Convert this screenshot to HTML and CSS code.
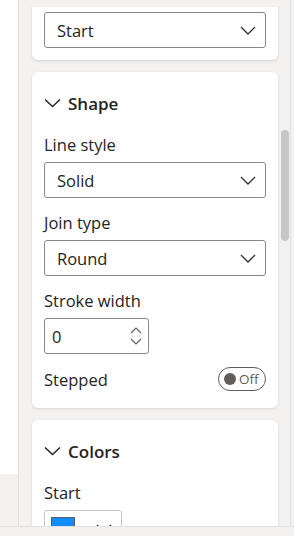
FILE: index.html
```html
<!DOCTYPE html>
<html lang="en">
<head>
    <meta charset="UTF-8">
    <meta name="viewport" content="width=device-width, initial-scale=1.0">
    <title>Format pane</title>
    <link rel="stylesheet" href="styles.css">
</head>
<body>
    <div class="app">
        <!-- Left strip -->
        <div class="side">
            <div class="side-top"></div>
            <div class="side-bottom"></div>
        </div>

        <!-- Format pane -->
        <div class="pane">
            <div class="viewport">
                <div class="cards">
                    <!-- Arrow card (scrolled) -->
                    <div class="card card-first">
                        <div class="dropdown">
                            <span>Start</span>
                            <svg class="chev" width="16" height="9" viewBox="0 0 16 9"><path d="M1 1 L8 8 L15 1" /></svg>
                        </div>
                    </div>

                    <!-- Shape card -->
                    <div class="card">
                        <div class="card-header">
                            <svg class="head-chev" width="17" height="10" viewBox="0 0 17 10"><path d="M1 1.5 L8.5 8.5 L16 1.5" /></svg>
                            <span>Shape</span>
                        </div>

                        <div class="field">
                            <label>Line style</label>
                            <div class="dropdown">
                                <span>Solid</span>
                                <svg class="chev" width="16" height="9" viewBox="0 0 16 9"><path d="M1 1 L8 8 L15 1" /></svg>
                            </div>
                        </div>

                        <div class="field">
                            <label>Join type</label>
                            <div class="dropdown">
                                <span>Round</span>
                                <svg class="chev" width="16" height="9" viewBox="0 0 16 9"><path d="M1 1 L8 8 L15 1" /></svg>
                            </div>
                        </div>

                        <div class="field">
                            <label>Stroke width</label>
                            <div class="spin">
                                <span>0</span>
                                <div class="spin-arrows">
                                    <svg width="12" height="7" viewBox="0 0 12 7"><path d="M1 6 L6 1 L11 6" /></svg>
                                    <svg width="12" height="7" viewBox="0 0 12 7"><path d="M1 1 L6 6 L11 1" /></svg>
                                </div>
                            </div>
                        </div>

                        <div class="toggle-row">
                            <span>Stepped</span>
                            <div class="toggle">
                                <span class="knob"></span>
                                <span class="toggle-text">Off</span>
                            </div>
                        </div>
                    </div>

                    <!-- Colors card -->
                    <div class="card">
                        <div class="card-header">
                            <svg class="head-chev" width="17" height="10" viewBox="0 0 17 10"><path d="M1 1.5 L8.5 8.5 L16 1.5" /></svg>
                            <span>Colors</span>
                        </div>

                        <div class="field">
                            <label>Start</label>
                            <div class="color-picker">
                                <span class="swatch"></span>
                                <svg class="chev" width="16" height="9" viewBox="0 0 16 9"><path d="M1 1 L8 8 L15 1" /></svg>
                            </div>
                        </div>
                    </div>
                </div>
            </div>

            <!-- Scrollbar -->
            <div class="scrollbar">
                <div class="thumb"></div>
            </div>
        </div>

        <div class="edge"></div>
    </div>

    <div class="statusbar"></div>
</body>
</html>
```

FILE: styles.css
```css
/* Reset default styles */
* {
    margin: 0;
    padding: 0;
    box-sizing: border-box;
}

body {
    font-family: "Open Sans", "Noto Sans", sans-serif;
    color: #252423;
    width: 294px;
    height: 536px;
    overflow: hidden;
    background-color: #f3f2f1;
}

.app {
    display: flex;
    height: 526px;
}

/* Left strip */
.side {
    width: 19px;
    border-right: 1px solid #e1dfdd;
    display: flex;
    flex-direction: column;
}

.side-top {
    height: 474px;
    background-color: #fff;
}

.side-bottom {
    flex: 1;
    background-color: #f3f2f1;
}

/* Format pane */
.pane {
    flex: 1;
    display: flex;
    padding-top: 7px;
    background-color: #f3f2f1;
}

.viewport {
    flex: 1;
    overflow: hidden;
    padding: 0 2px 0 13px;
}

.cards {
    margin-top: -7px;
    display: flex;
    flex-direction: column;
    gap: 12px;
}

.card {
    background-color: #fff;
    border-radius: 6px;
    box-shadow: 0 1px 3px rgba(0, 0, 0, 0.13);
    padding: 20px 12px 17px;
}

.card-first {
    padding: 12px 12px 12px;
}

.card-header {
    display: flex;
    align-items: center;
    gap: 7px;
    height: 22px;
    font-size: 17px;
    font-weight: 600;
}

.head-chev path {
    fill: none;
    stroke: #252423;
    stroke-width: 1.5;
}

.field {
    display: flex;
    flex-direction: column;
    gap: 7px;
    margin-top: 15px;
}

.card-header + .field {
    margin-top: 21px;
}

.field label {
    font-size: 16.5px;
    line-height: 20px;
}

/* Dropdown */
.dropdown {
    height: 36px;
    border: 1px solid #8a8886;
    border-radius: 3px;
    display: flex;
    align-items: center;
    justify-content: space-between;
    padding: 0 9px 0 12px;
    font-size: 16.5px;
}

.chev path {
    fill: none;
    stroke: #323130;
    stroke-width: 1.3;
}

/* Spin input */
.spin {
    width: 105px;
    height: 36px;
    border: 1px solid #8a8886;
    border-radius: 3px;
    display: flex;
    align-items: center;
    justify-content: space-between;
    padding: 0 6px 0 7px;
    font-size: 16.5px;
}

.spin-arrows {
    display: flex;
    flex-direction: column;
    gap: 4px;
}

.spin-arrows path {
    fill: none;
    stroke: #605e5c;
    stroke-width: 1.1;
}

/* Toggle */
.toggle-row {
    display: flex;
    align-items: center;
    justify-content: space-between;
    margin-top: 13px;
    font-size: 16.5px;
}

.toggle {
    width: 48px;
    height: 24px;
    border: 1px solid #605e5c;
    border-radius: 12px;
    display: flex;
    align-items: center;
    padding-left: 5px;
    gap: 3px;
}

.knob {
    width: 12px;
    height: 12px;
    border-radius: 50%;
    background-color: #605e5c;
}

.toggle-text {
    font-size: 13.5px;
    color: #605e5c;
}

/* Color picker */
.color-picker {
    width: 78px;
    height: 36px;
    border: 1px solid #c8c6c4;
    border-radius: 3px;
    display: flex;
    align-items: center;
    justify-content: space-between;
    padding: 0 9px 0 6px;
}

.swatch {
    width: 24px;
    height: 22px;
    background-color: #118dff;
    border: 1px solid #605e5c;
}

/* Scrollbar */
.scrollbar {
    width: 10px;
    padding: 123px 1px 0 1px;
}

.thumb {
    height: 111px;
    border-radius: 4px;
    background-color: #c8c6c4;
}

.edge {
    width: 4px;
    border-left: 1px solid #e1dfdd;
    background-color: #f3f2f1;
}

.statusbar {
    height: 10px;
    border-top: 1px solid #e1dfdd;
    background-color: #f3f2f1;
}
```
